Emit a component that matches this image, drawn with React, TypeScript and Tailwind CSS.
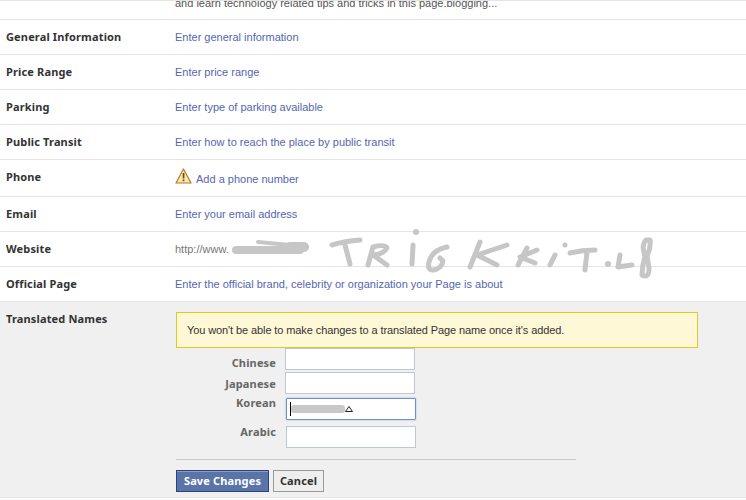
import React from 'react';

const sans = "font-['Liberation_Sans',sans-serif]";
const bold = "font-['Noto_Sans',sans-serif] font-bold text-[11px] leading-[16px] tracking-[0.15px]";
const plain = "text-[11px] leading-[16px]";

function Row({ label, h = 'h-[35px]', children }: { label: string; h?: string; children: React.ReactNode }) {
  return (
    <div className={`flex ${h} border-b border-[#e5e5e5]`}>
      <div className={`w-[175px] pl-[6px] pt-[9px] text-[#333333] ${bold}`}>{label}</div>
      <div className={`flex-1 pt-[9px] text-[#5566b0] ${plain}`}>{children}</div>
    </div>
  );
}

function WarningIcon() {
  return (
    <svg width="17" height="16" viewBox="0 0 17 16" className="shrink-0 -mt-[1px]">
      <path d="M8.5 1 L16 15 H1 Z" fill="#fbe9a8" stroke="#b5772a" strokeWidth="1.2" strokeLinejoin="round" />
      <rect x="7.7" y="5" width="1.7" height="5.5" fill="#6b4a1e" />
      <rect x="7.7" y="11.5" width="1.7" height="1.7" fill="#6b4a1e" />
    </svg>
  );
}

export default function App() {
  return (
    <div className={`relative h-[500px] w-[746px] overflow-hidden bg-white ${sans}`}>
      <div className="h-[20px] overflow-hidden border-t border-b border-[#e5e5e5]">
        <div className={`pl-[175px] -mt-[6px] text-[#555555] ${plain}`}>
          and learn technology related tips and tricks in this page.blogging...
        </div>
      </div>

      <Row label="General Information">Enter general information</Row>
      <Row label="Price Range">Enter price range</Row>
      <Row label="Parking">Enter type of parking available</Row>
      <Row label="Public Transit">Enter how to reach the place by public transit</Row>
      <Row label="Phone" h="h-[37px]">
        <div className="flex items-start gap-[4px]">
          <WarningIcon />
          <span className="mt-[2px]">Add a phone number</span>
        </div>
      </Row>
      <Row label="Email">Enter your email address</Row>
      <Row label="Website"><span className="text-[#777777]">http://www.</span></Row>
      <Row label="Official Page">Enter the official brand, celebrity or organization your Page is about</Row>

      <div className="flex h-[196px] border-b border-[#e5e5e5] bg-[#f0f0f0] pt-[10px]">
        <div className={`w-[176px] pl-[6px] -mt-[1px] text-[#333333] ${bold}`}>Translated Names</div>
        <div className="w-[522px]">
          <div className={`flex h-[36px] items-center border border-[#e2c822] bg-[#fff8d6] pl-[10px] tracking-[-0.1px] text-[#333333] ${plain}`}>
            You won't be able to make changes to a translated Page name once it's added.
          </div>
          <div className="flex">
            <div className={`w-[100px] pt-[7px] text-right text-[#666666] ${bold}`}>Chinese</div>
            <div className="ml-[9px] h-[22px] w-[130px] border border-[#bdc7d8] bg-white" />
          </div>
          <div className="mt-[1px] flex">
            <div className={`w-[100px] pt-[4px] text-right text-[#666666] ${bold}`}>Japanese</div>
            <div className="ml-[9px] h-[22px] w-[130px] border border-[#bdc7d8] bg-white" />
          </div>
          <div className="mt-[4px] flex">
            <div className={`w-[100px] -mt-[3px] text-right text-[#666666] ${bold}`}>Korean</div>
            <div className="ml-[10px] flex h-[22px] w-[130px] items-center rounded-[1px] border border-[#6d8fd8] bg-white pl-[3px] shadow-[0_0_2px_#8fb0ee]">
              <div className="h-[14px] w-px bg-black" />
              <div className="h-[8px] w-[54px] rounded-[3px] bg-[#c8c8c8]" />
              <svg width="8" height="6" viewBox="0 0 8 6"><path d="M4 .5 L7.5 5.5 H.5 Z" fill="white" stroke="#222" /></svg>
            </div>
          </div>
          <div className="mt-[6px] flex">
            <div className={`w-[100px] -mt-[2px] text-right text-[#666666] ${bold}`}>Arabic</div>
            <div className="ml-[10px] h-[22px] w-[130px] border border-[#bdc7d8] bg-white" />
          </div>
          <div className="mt-[11px] h-px w-[400px] bg-[#c8c8c8]" />
          <div className="mt-[10px] flex gap-[4px]">
            <button className={`h-[22px] w-[93px] border border-[#29447e] bg-[#5b74a8] text-white shadow-[inset_0_1px_0_#8a9cc2] ${bold}`}>Save Changes</button>
            <button className={`h-[22px] w-[51px] border border-[#999999] bg-[#eeeeee] text-[#333333] ${bold}`}>Cancel</button>
          </div>
        </div>
      </div>

      {/* hand drawn watermark over the website row */}
      <svg className="absolute left-0 top-0 pointer-events-none" width="746" height="300" viewBox="0 0 746 300" fill="none" stroke="#c6c6c6" strokeWidth="5" strokeLinecap="round" strokeLinejoin="round">
        <path d="M236 250 H300" strokeWidth="8" />
        <path d="M258 242 L290 245" strokeWidth="4" />
        <path d="M290 247 H304" strokeWidth="10" />
        <path d="M332 245 Q345 241 360 240 M345 245 L350 264" />
        <path d="M368 265 L373 247 Q385 244 387 248 Q384 254 373 255 L387 265" />
        <path d="M416 232 L416 232" strokeWidth="6" />
        <path d="M413 245 L412 264" />
        <path d="M447 247 Q432 250 429 262 Q427 271 434 270 Q442 268 443 261 L440 258" />
        <path d="M480 242 L470 267 M507 245 L477 255 L497 265" />
        <path d="M527 248 L518 265 M537 250 L520 257 L535 263" />
        <path d="M565 245 L565 245 M555 255 L550 265" />
        <path d="M570 253 Q582 250 595 250 M587 252 L585 270" />
        <path d="M608 264 L608 264" strokeWidth="6" />
        <path d="M620 255 L618 267 L632 265" />
        <path d="M646 240 Q641 245 645 256 Q642 266 642 275 Q649 279 649 268 L647 256 Q651 248 650 240 Z" />
      </svg>
    </div>
  );
}
